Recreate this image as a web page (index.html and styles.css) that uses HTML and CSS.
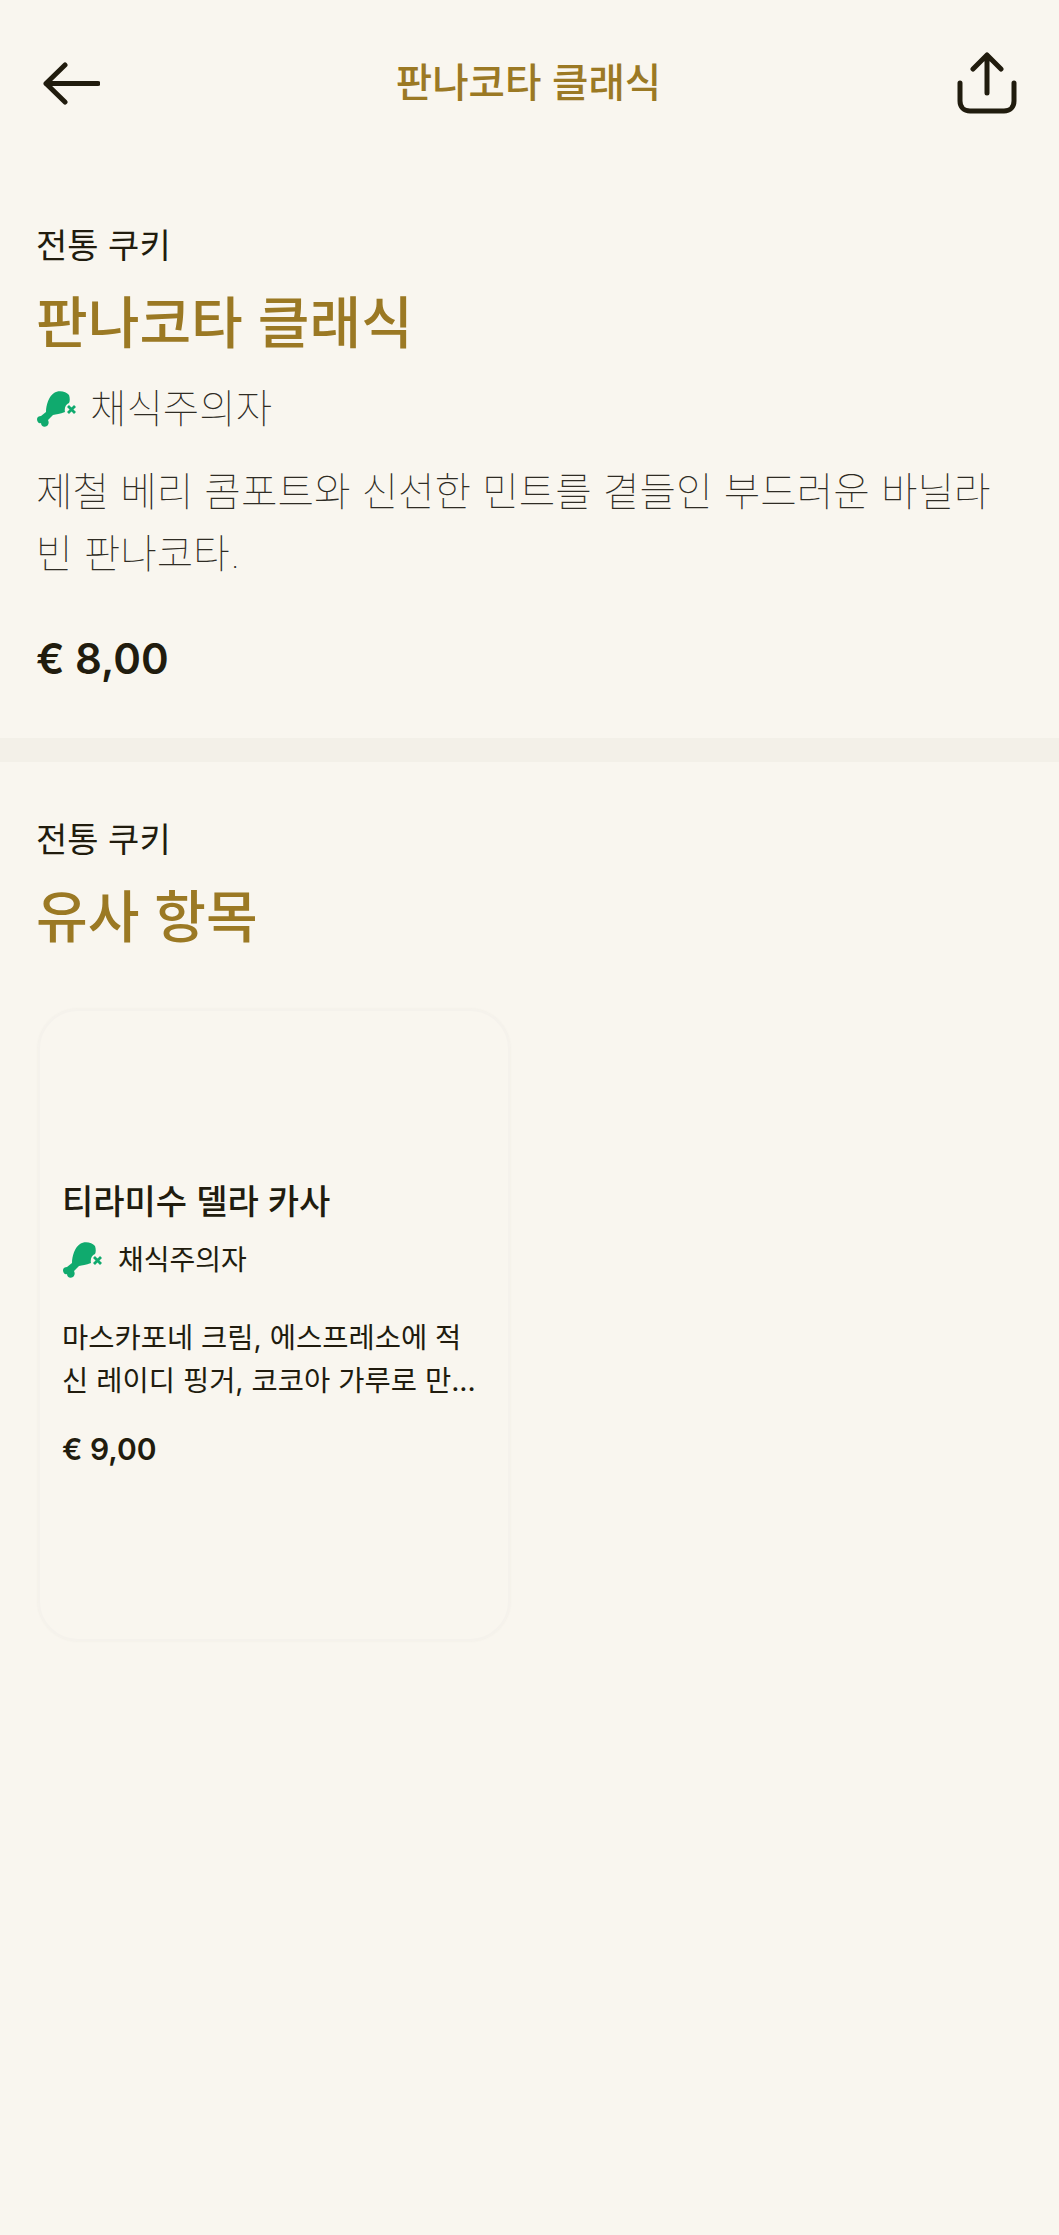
FILE: index.html
```html
<!DOCTYPE html>
<html lang="ko">
<head>
<meta charset="utf-8">
<title>판나코타 클래식</title>
<link rel="stylesheet" href="styles.css">
</head>
<body>
<header class="topbar">
  <button class="icon-btn" aria-label="back">
    <svg width="60" height="44" viewBox="0 0 60 44"><path class="stroke" d="M58 22.5H6M25 4 6 22.5 25 41"/></svg>
  </button>
  <div class="topbar-title">판나코타 클래식</div>
  <button class="icon-btn" aria-label="share">
    <svg width="60" height="62" viewBox="0 0 60 62"><path class="stroke" d="M30 3v38M16 17 30 3l14 14M3 31v18c0 6 4 10 10 10h34c6 0 10-4 10-10V31"/></svg>
  </button>
</header>
<main>
  <section class="detail">
    <div class="category">전통 쿠키</div>
    <h1 class="heading">판나코타 클래식</h1>
    <div class="diet diet-lg">
      <svg class="leg" viewBox="0 0 40 36"><path class="leg-fill" d="M1 28C1 26 3 25 5 25L10 21C10 14 13 5 18 2 22-1 30 0 33 4 34 7 34 10 33 12 30 13 28 17 29 21 24 23 20 23 17 24L12 29C13 31 13 33 11 35 8 37 5 35 5 32 3 33 1 31 1 28Z"/><path class="leg-x" d="m32 15 7 7m0-7-7 7"/></svg>
      <span>채식주의자</span>
    </div>
    <p class="desc">제철 베리 콤포트와 신선한 민트를 곁들인 부드러운 바닐라 빈 판나코타.</p>
    <div class="price">€ 8,00</div>
  </section>
  <div class="divider"></div>
  <section class="similar">
    <div class="category">전통 쿠키</div>
    <h2 class="heading">유사 항목</h2>
    <article class="card">
      <h3 class="card-title">티라미수 델라 카사</h3>
      <div class="diet diet-sm">
        <svg class="leg" viewBox="0 0 40 36"><path class="leg-fill" d="M1 28C1 26 3 25 5 25L10 21C10 14 13 5 18 2 22-1 30 0 33 4 34 7 34 10 33 12 30 13 28 17 29 21 24 23 20 23 17 24L12 29C13 31 13 33 11 35 8 37 5 35 5 32 3 33 1 31 1 28Z"/><path class="leg-x" d="m32 15 7 7m0-7-7 7"/></svg>
        <span>채식주의자</span>
      </div>
      <p class="card-desc">마스카포네 크림, 에스프레소에 적신 레이디 핑거, 코코아 가루로 만...</p>
      <div class="card-price">€ 9,00</div>
    </article>
  </section>
</main>
</body>
</html>
```
FILE: styles.css
```css
* { box-sizing: border-box; }
html, body { margin: 0; padding: 0; }
body {
  width: 1059px;
  min-height: 2235px;
  background: #f9f6ef;
  color: #211c0e;
  font-family: Inter, "Noto Sans CJK KR", sans-serif;
}
.topbar {
  height: 166px;
  display: flex;
  align-items: center;
  justify-content: space-between;
  padding: 52px 42px 52px 40px;
}
.icon-btn { border: 0; background: none; padding: 0; display: block; line-height: 0; }
.stroke { fill: none; stroke: #211c0e; stroke-width: 5; stroke-linecap: round; stroke-linejoin: round; }
.topbar-title {
  color: #9b7924;
  font-size: 39.6px;
  line-height: 60px;
  font-weight: 500;
}
.detail { height: 572px; padding: 55px 36px 0; }
.category { font-size: 34px; line-height: 50px; font-weight: 400; }
.heading {
  margin: 14px 0 0;
  color: #9b7924;
  font-size: 56.2px;
  line-height: 76px;
  font-weight: 500;
}
.diet { display: flex; align-items: center; }
.diet-lg { margin-top: 18px; gap: 14px; font-size: 39.6px; line-height: 60px; font-weight: 100; color: #2f2c24; }
.leg { display: block; flex: none; width: 40px; height: 36px; }
.leg-fill { fill: #10aa6e; }
.leg-x { fill: none; stroke: #10aa6e; stroke-width: 2.8; }
.desc { margin: 22px 0 0; font-size: 39.7px; line-height: 62px; font-weight: 100; color: #2f2c24; }
.price { margin-top: 44px; font-size: 42px; line-height: 60px; font-weight: 600; }
.divider { height: 24px; background: #f3f0e8; }
.similar { padding: 53px 36px 0; }
.card {
  margin: 54px 0 0 2px;
  width: 472px;
  height: 632px;
  border-radius: 40px;
  border: 2px solid #f5f2ec;
  box-shadow: 0 0 3px rgba(60, 50, 20, 0.05);
  padding: 166px 22px 0;
}
.card-title { margin: 0; font-size: 34px; line-height: 50px; font-weight: 500; }
.diet-sm { margin-top: 10px; gap: 16px; font-size: 28px; line-height: 46px; }
.card-desc {
  margin: 33px 0 0;
  font-size: 28.5px;
  line-height: 43px;
  word-break: break-all;
}
.card-price { margin-top: 24px; font-size: 30px; line-height: 46px; font-weight: 600; }
```
